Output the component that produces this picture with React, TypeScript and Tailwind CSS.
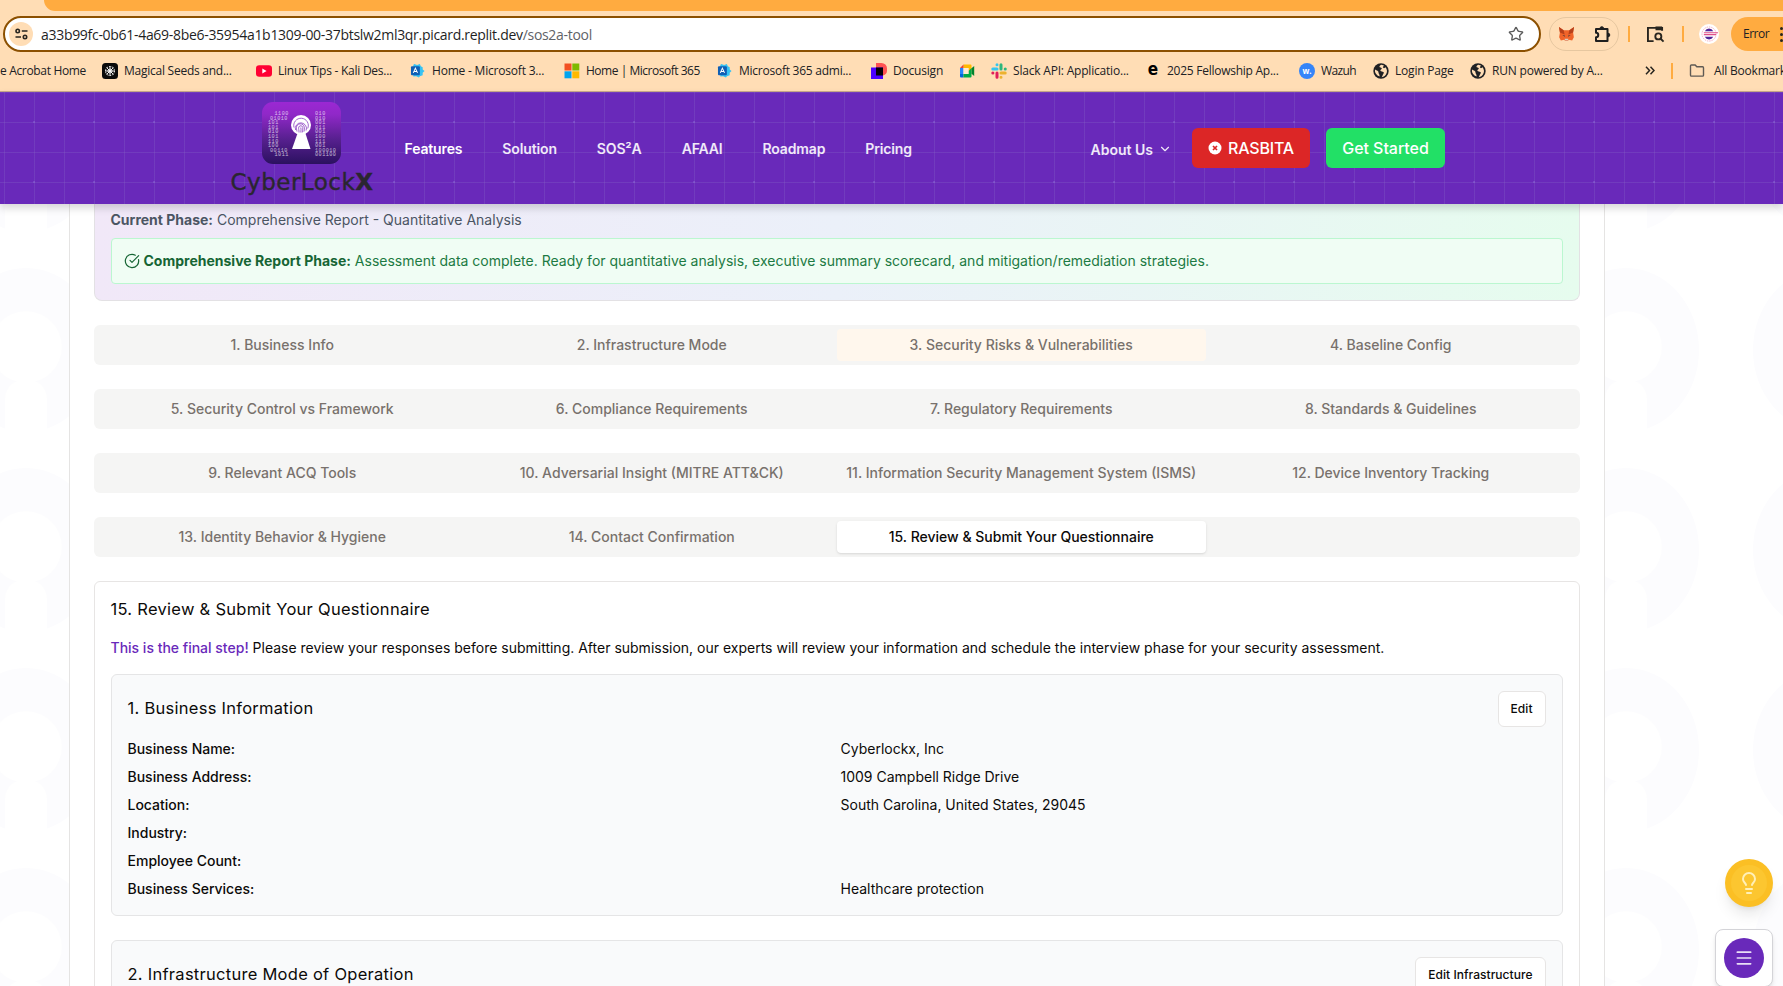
import React from "react";
import { ChevronDown, CircleCheckBig, Lightbulb, Menu, Star } from "lucide-react";

const PURPLE_GRID =
  "bg-[#6929ba] bg-[image:radial-gradient(circle_at_1px_1px,rgba(150,120,225,0.35)_1px,transparent_1.2px),linear-gradient(to_right,rgba(140,120,200,0.24)_1px,transparent_1px),linear-gradient(to_bottom,rgba(140,120,200,0.24)_1px,transparent_1px)] bg-[size:60px_60px,30px_30px,30px_30px] bg-[position:33px_29px,4px_0px,4px_0px]";

function GlobeIcon() {
  return (
    <svg width="16" height="16" viewBox="0 0 16 16">
      <circle cx="8" cy="8" r="7.700" fill="#202124" />
      <path d="M8.200 1.800C6 3 6 4.300 7.600 4.600c1.600.3 1.500 1.400.400 2C6.900 7.200 7.200 8.300 8.800 8.400c1.900.1 2.600 1.300 1.500 2.500-.8.9-.6 1.700-1.600 3.300A6.200 6.200 0 0 0 12.600 4.200L11 5.200 9.800 4.300 11 2.600z" fill="#ffddb5" />
      <path d="M2 6.500c1.800 1 3.700 1.600 3.500 3.100-.2 1.200 1.300 1.500 1.100 3.800A6 6 0 0 1 2 6.500z" fill="#ffddb5" />
    </svg>
  );
}

function AdminIcon() {
  return (
    <svg width="16" height="15" viewBox="0 0 16 16">
      <path d="M4 1l3 1 3-1 1 2.500 2 1V7l2 1.500-2 2V13l-3 1-1 1.500L6 14l-3 .5V2z" fill="#36c2f3" />
      <rect x="0.500" y="3.500" width="9.500" height="9.500" rx="1" fill="#0f5fb5" />
      <path d="M3 10.500L5.200 5.500 7.500 10.500M3.800 9h3" stroke="#fff" strokeWidth="1.100" fill="none" />
    </svg>
  );
}

function SeedsIcon() {
  return (
    <svg width="16" height="16" viewBox="0 0 16 16">
      <rect width="16" height="16" rx="3.500" fill="#0b0b0b" />
      <g stroke="#fff" strokeWidth="0.900" fill="none">
        <path d="M8 3v10M3 8h10M4.500 4.500l7 7M11.500 4.500l-7 7" />
        <circle cx="8" cy="8" r="2" />
        <circle cx="8" cy="8" r="4.500" strokeDasharray="1.600 1.200" />
      </g>
    </svg>
  );
}

function YouTubeIcon() {
  return (
    <svg width="16" height="16" viewBox="0 0 16 16">
      <rect y="2.300" width="16" height="11.500" rx="3.200" fill="#ff0033" />
      <path d="M6.300 5.600v4.800L10.600 8z" fill="#fff" />
    </svg>
  );
}

function MicrosoftIcon() {
  return (
    <svg width="16" height="16" viewBox="0 0 16 16">
      <path fill="#f25022" d="M0.500 0.500h7v7h-7z" />
      <path fill="#7fba00" d="M8.300 0.500h7v7h-7z" />
      <path fill="#00a4ef" d="M0.500 8.300h7v7h-7z" />
      <path fill="#ffb900" d="M8.300 8.300h7v7h-7z" />
    </svg>
  );
}

function DocusignIcon() {
  return (
    <svg width="16" height="16" viewBox="0 0 16 16">
      <path fill="#ff5252" d="M5 0h5.500A5.500 5.500 0 0 1 16 5.500v2a5 5 0 0 1-4 5H5z" />
      <path fill="#4c00ff" d="M0 4.500h12V16H0z" />
      <path fill="#050008" d="M5 4.500h7v8H5z" />
    </svg>
  );
}

function MeetIcon() {
  return (
    <svg width="16" height="16" viewBox="0 0 16 16">
      <path fill="#ffba00" d="M4.500 1.500H11.500a1 1 0 0 1 1 1V7l-3 1V5H4.500z" />
      <path fill="#ea4335" d="M1 5l3.500-3.500V5z" />
      <path fill="#2684fc" d="M1 5h3.500v6H1z" />
      <path fill="#0066da" d="M1 11h3.500v3.500H2a1 1 0 0 1-1-1z" />
      <path fill="#00ac47" d="M4.500 11H9.500V8l3-3v8.500a1 1 0 0 1-1 1h-7z" />
      <path fill="#00832d" d="M12.500 5.200L15.200 3v10l-2.700-2.200z" />
      <path fill="#ffe9cf" d="M4.500 5h5v6h-5z" />
    </svg>
  );
}

function SlackIcon() {
  return (
    <svg width="16" height="16" viewBox="0 0 16 16" strokeWidth="3" strokeLinecap="round">
      <path stroke="#36c5f0" d="M6 6H1.800M6 1.700v.1" />
      <path stroke="#2eb67d" d="M10 6V1.800M14.200 6h.1" />
      <path stroke="#ecb22e" d="M10 10h4.200M10 14.200v.1" />
      <path stroke="#e01e5a" d="M6 10v4.200M1.800 10h.1" />
    </svg>
  );
}

function LetterE() {
  return <span className="block w-4 pb-[3px] text-center font-['DejaVu_Sans_Condensed','DejaVu_Sans'] text-[17px] leading-4 font-bold text-black">e</span>;
}

function WazuhIcon() {
  return (
    <span className="flex size-4 items-center justify-center rounded-full bg-[#3585f9] text-[8px] font-bold text-white">
      w.
    </span>
  );
}

type Bookmark = { label: string; icon?: React.ReactNode; cell: string; tracking: string };

const bookmarks: Bookmark[] = [
  { label: "e Acrobat Home", cell: "w-[102px]", tracking: "tracking-[-0.33px]" },
  { label: "Magical Seeds and...", icon: <SeedsIcon />, cell: "w-[154px]", tracking: "tracking-[-0.25px]" },
  { label: "Linux Tips - Kali Des...", icon: <YouTubeIcon />, cell: "w-[154px]", tracking: "tracking-[-0.25px]" },
  { label: "Home - Microsoft 3...", icon: <AdminIcon />, cell: "w-[154px]", tracking: "tracking-[-0.2px]" },
  { label: "Home | Microsoft 365", icon: <MicrosoftIcon />, cell: "w-[153px]", tracking: "tracking-[-0.48px]" },
  { label: "Microsoft 365 admi...", icon: <AdminIcon />, cell: "w-[154px]", tracking: "tracking-[-0.25px]" },
  { label: "Docusign", icon: <DocusignIcon />, cell: "w-[88px]", tracking: "tracking-[-0.2px]" },
  { label: "", icon: <MeetIcon />, cell: "w-[32px]", tracking: "tracking-[-0.2px]" },
  { label: "Slack API: Applicatio...", icon: <SlackIcon />, cell: "w-[154px]", tracking: "tracking-[-0.2px]" },
  { label: "2025 Fellowship Ap...", icon: <LetterE />, cell: "w-[154px]", tracking: "tracking-[-0.26px]" },
  { label: "Wazuh", icon: <WazuhIcon />, cell: "w-[74px]", tracking: "tracking-[-0.6px]" },
  { label: "Login Page", icon: <GlobeIcon />, cell: "w-[97px]", tracking: "tracking-[-0.2px]" },
  { label: "RUN powered by A...", icon: <GlobeIcon />, cell: "w-[174px]", tracking: "tracking-[-0.2px]" },
];

function BrowserBar() {
  return (
    <div className="h-[92px] overflow-hidden border-b border-[#c9a98a] bg-[#ffddb5] font-['Open_Sans',sans-serif] text-[#202124]">
      <div className="flex h-[11px] justify-end">
        <div className="h-[11px] w-[1739px] rounded-bl-[11px] bg-[#ffab40]" />
      </div>
      <div className="mt-[5px] flex h-9 items-center">
        <div className="ml-[3px] flex h-9 w-[1538px] shrink-0 items-center rounded-full border-2 border-[#8c5000] bg-white">
          <span className="ml-1 flex size-6 items-center justify-center rounded-full bg-[#ffddb5]">
            <svg width="13" height="12" viewBox="0 0 13 12" fill="none" stroke="#28251f" strokeWidth="1.600">
              <circle cx="2.700" cy="3" r="1.700" />
              <path d="M6.800 3H12.500M0.500 9H6" />
              <circle cx="10" cy="9" r="1.700" />
            </svg>
          </span>
          <span className="ml-2 text-[14px] tracking-[-0.3px] whitespace-nowrap text-[#1f1f1f]">
            a33b99fc-0b61-4a69-8be6-35954a1b1309-00-37btslw2ml3qr.picard.replit.dev<span className="text-[#5f6368]">/sos2a-tool</span>
          </span>
          <Star className="mr-[15px] ml-auto size-[16px] text-[#5a5a5a]" strokeWidth={2} />
        </div>
        <div className="ml-2 flex h-[34px] w-[70px] shrink-0 items-center justify-between rounded-full border border-[#e6c7a0] pr-[7px] pl-2">
          <svg width="17" height="16" viewBox="0 0 17 17">
            <path d="M0.500 1l5 3.500h6l5-3.500-1 6 .8 5-1.800 3.500-3.500-1L9.800 16H7.200L6 14.500l-3.500 1L.700 12l.8-5z" fill="#f0642a" />
            <path d="M.500 1l5 3.500L6.500 9 1.500 7zM16.500 1l-5 3.500-1 4.500 5-2z" fill="#b8401a" />
            <path d="M4 9.500l2.500.5.5 1.500zM13 9.500l-2.500.5-.5 1.500z" fill="#26303d" />
            <path d="M6.500 13.500h4l-.5 2h-3z" fill="#d9ccc2" />
          </svg>
          <svg width="17" height="18" viewBox="0 0 17 18" fill="none" stroke="#1f1f1f" strokeWidth="2">
            <path d="M2 4h11.500v12H2v-3.800c3 0 3-4.400 0-4.400z" strokeLinejoin="round" />
            <path d="M6 3.500a1.800 1.800 0 0 1 3.600 0z" fill="#1f1f1f" strokeWidth="1" />
            <path d="M14 8.200a1.800 1.800 0 0 1 0 3.600z" fill="#1f1f1f" strokeWidth="1" />
          </svg>
        </div>
        <span className="ml-[9px] h-4 w-[2px] shrink-0 bg-[#ffab40]" />
        <svg className="ml-[16px] shrink-0" width="19" height="17" viewBox="0 0 20 18" fill="none" stroke="#28251f" strokeWidth="2">
          <path d="M8 16H2V2h15v3" />
          <path d="M10 2.500h7" strokeWidth="4" />
          <circle cx="13" cy="11" r="3.200" />
          <path d="M15.500 13.500l3 3" />
        </svg>
        <span className="ml-[17px] h-4 w-[2px] shrink-0 bg-[#ffab40]" />
        <span className="ml-[15px] flex size-[20px] shrink-0 items-center justify-center rounded-full bg-white">
          <svg width="19" height="16" viewBox="0 0 20 17">
            <circle cx="9.500" cy="8.500" r="7.500" fill="none" stroke="#f3a6bd" strokeWidth="1" strokeDasharray="1.500 1" />
            <path d="M5 5.500a5 5 0 0 1 9 0zM5 11.500a5 5 0 0 0 9 0z" fill="#52279a" />
            <path d="M4 7.200h15M4 9.200h13" stroke="#e0508a" strokeWidth="1.200" />
          </svg>
        </span>
        <div className="ml-[12px] flex h-[34px] w-[80px] shrink-0 items-center rounded-full bg-[#ffab40] pl-3 text-[12px]">
          <span className="w-[26px] tracking-[-0.5px]">Error</span>
          <span className="ml-[11px] flex flex-col gap-[3px]">
            <i className="size-[3px] rounded-full bg-[#28251f]" />
            <i className="size-[3px] rounded-full bg-[#28251f]" />
            <i className="size-[3px] rounded-full bg-[#28251f]" />
          </span>
        </div>
      </div>
      <div className="mt-1 flex h-[29px] items-center text-[12px] whitespace-nowrap">
        {bookmarks.map((b, i) => (
          <div key={i} className={`flex shrink-0 items-center gap-[6px] ${b.cell}`}>
            {b.icon}
            <span className={b.tracking}>{b.label}</span>
          </div>
        ))}
        <svg width="10" height="9" viewBox="0 0 10 9" fill="none" stroke="#28251f" strokeWidth="1.500" className="ml-px shrink-0">
          <path d="M1 .8l3.500 3.700L1 8.200M5.500.8L9 4.500 5.500 8.200" />
        </svg>
        <span className="ml-[16px] h-4 w-[2px] shrink-0 bg-[#ffab40]" />
        <svg width="16" height="13" viewBox="0 0 16 14" fill="none" stroke="#5f5a54" strokeWidth="1.500" className="ml-[16px] shrink-0">
          <path d="M1 2a1 1 0 0 1 1-1h4l1.800 2H14a1 1 0 0 1 1 1v8a1 1 0 0 1-1 1H2a1 1 0 0 1-1-1z" />
        </svg>
        <span className="ml-[9px] tracking-[-0.2px]">All Bookmarks</span>
      </div>
    </div>
  );
}

const leftBits = [
  { x: 12.5, t: "1100" }, { x: 8, t: "01010" }, { x: 6, t: "101" }, { x: 6, t: "101" }, { x: 6, t: "010" },
  { x: 6, t: "101" }, { x: 6, t: "110" }, { x: 6, t: "100" }, { x: 8, t: "00110" }, { x: 12.5, t: "1011" },
];
const rightBits = ["010", "010", "001", "011", "001", "100", "111", "001", "100010", "001100"];

function Logo() {
  return (
    <div className="flex w-[144px] flex-col items-center">
      <svg width="79" height="62" viewBox="0 0 79 62" className="relative -left-px">
        <defs>
          <linearGradient id="logo-bg" x1="0" y1="0" x2="0" y2="1">
            <stop offset="0" stopColor="#9b28d3" />
            <stop offset="0.200" stopColor="#9028c8" />
            <stop offset="0.600" stopColor="#57208f" />
            <stop offset="1" stopColor="#2b1160" />
          </linearGradient>
        </defs>
        <rect width="79" height="62" rx="11" fill="url(#logo-bg)" />
        <g fill="#fff" fillOpacity="0.700" fontFamily="Liberation Mono, monospace" fontSize="5.200" letterSpacing="0.450">
          {leftBits.map((b, i) => (
            <text key={i} x={b.x} y={13.2 + i * 4.55}>{b.t}</text>
          ))}
          {rightBits.map((t, i) => (
            <text key={i} x="53" y={13.2 + i * 4.55}>{t}</text>
          ))}
        </g>
        <circle cx="39" cy="23" r="10" fill="#fff" />
        <path d="M36 30h7l5.500 17h-18.500z" fill="#fff" />
        <g fill="none" stroke="#8a3fc0" strokeWidth="0.800">
          <path d="M32 25.500a7.300 7.300 0 1 1 13.700 1M33.500 28a5.600 5.600 0 1 1 10.600 .5M35 29.500c-.4-2-.8-3.500-.3-5.300a4 4 0 0 1 7.700 1.500c0 1.600 0 2.800-.5 4M37 30.500c.2-2-.8-4-.2-5.500a2.100 2.100 0 0 1 4 .5c.1 2-.1 3.400-.6 5M38.800 25.500c.2 1.500.4 3 0 5" />
        </g>
      </svg>
      <div className="mt-[4px] h-7 font-['DejaVu_Sans',sans-serif] text-[23px] leading-7 font-normal tracking-[0.5px] whitespace-nowrap text-[#2a2630] [-webkit-text-stroke:0.4px_#2a2630]">
        CyberLock<span className="font-bold">X</span>
      </div>
    </div>
  );
}

const navItems = ["Features", "Solution", "SOS²A", "AFAAI", "Roadmap", "Pricing"];

function Header() {
  return (
    <header className={`relative z-10 flex h-[112px] shrink-0 items-center shadow-[0_4px_8px_rgba(0,0,0,0.16)] ${PURPLE_GRID}`}>
      <div className="ml-[230px] pt-[1px]">
        <Logo />
      </div>
      <nav className="ml-[30.5px] flex items-center gap-10 text-[14px] font-semibold tracking-[-0.14px] text-white/90">
        {navItems.map((n) => (
          <span key={n} className={n === "Features" ? "text-white" : ""}>{n}</span>
        ))}
      </nav>
      <div className="mr-[338px] ml-auto flex items-center text-white">
        <span className="flex items-center gap-[5px] pt-[2px] text-[14px] font-semibold text-white/90">
          About Us <ChevronDown className="size-[14px]" />
        </span>
        <span className="ml-[20px] flex h-10 w-[118px] items-center justify-center gap-[6px] rounded-md bg-[#dc2626] text-[16px] font-medium tracking-[-0.2px]">
          <svg width="14" height="14" viewBox="0 0 14 14">
            <circle cx="7" cy="7" r="6.500" fill="#fff" />
            <path d="M5 5l4 4M9 5l-4 4" stroke="#dc2626" strokeWidth="1.700" />
          </svg>
          RASBITA
        </span>
        <span className="ml-4 flex h-10 w-[119px] items-center justify-center rounded-md bg-[#22e066] text-[16px] font-medium tracking-[-0.05px]">
          Get Started
        </span>
      </div>
    </header>
  );
}

const faintBits = [
  { x: 1715, y: 242, t: "10101011" }, { x: 1715, y: 542, t: "10101011" }, { x: 1715, y: 842, t: "10101011" },
  { x: 1755, y: 302, t: "11100" }, { x: 1755, y: 602, t: "11100" }, { x: 1755, y: 902, t: "11100" },
  { x: 1724, y: 422, t: "10110101" }, { x: 1724, y: 722, t: "10110101" },
  { x: 1764, y: 482, t: "110" }, { x: 1764, y: 782, t: "110" },
  { x: 1607, y: 212, t: "1100" }, { x: 1607, y: 512, t: "1100" }, { x: 1607, y: 812, t: "1100" },
  { x: 1607, y: 332, t: "00" }, { x: 1607, y: 632, t: "00" }, { x: 1607, y: 932, t: "00" },
  { x: 44, y: 452, t: "0100" }, { x: 54, y: 572, t: "01" }, { x: 54, y: 272, t: "01" }, { x: 0, y: 482, t: "10" },
];

function Backdrop() {
  return (
    <svg className="absolute inset-0" width="1783" height="782" viewBox="0 204 1783 782">
      <defs>
        <pattern id="keyholes" x="-74" y="250" width="200" height="200" patternUnits="userSpaceOnUse">
          <ellipse cx="100" cy="100" rx="73" ry="82" fill="#fcfcfe" />
          <circle cx="100" cy="97" r="36" fill="#fff" />
          <path d="M79 185V148a21 19 0 0 1 42 0V185z" fill="#fff" />
        </pattern>
      </defs>
      <rect y="204" width="1783" height="782" fill="url(#keyholes)" />
      <g fill="#000" fillOpacity="0.020" fontFamily="Liberation Mono, monospace" fontSize="9">
        {faintBits.map((b, i) => (
          <text key={i} x={b.x} y={b.y}>{b.t}</text>
        ))}
      </g>
    </svg>
  );
}

const tabRows = [
  ["1. Business Info", "2. Infrastructure Mode", "3. Security Risks & Vulnerabilities", "4. Baseline Config"],
  ["5. Security Control vs Framework", "6. Compliance Requirements", "7. Regulatory Requirements", "8. Standards & Guidelines"],
  ["9. Relevant ACQ Tools", "10. Adversarial Insight (MITRE ATT&CK)", "11. Information Security Management System (ISMS)", "12. Device Inventory Tracking"],
  ["13. Identity Behavior & Hygiene", "14. Contact Confirmation", "15. Review & Submit Your Questionnaire"],
];

function tabClass(label: string) {
  if (label.startsWith("15.")) return "bg-white text-[#0c0a09] shadow-sm";
  if (label.startsWith("3.")) return "bg-[#fff7ed] text-[#78716c]";
  return "text-[#78716c]";
}

const businessRows = [
  ["Business Name:", "Cyberlockx, Inc"],
  ["Business Address:", "1009 Campbell Ridge Drive"],
  ["Location:", "South Carolina, United States, 29045"],
  ["Industry:", ""],
  ["Employee Count:", ""],
  ["Business Services:", "Healthcare protection"],
];

function SectionHead({ title, action }: { title: string; action: string }) {
  return (
    <div className="flex h-9 items-center justify-between">
      <h3 className="pb-[2px] text-[16.5px] tracking-[0.27px]">{title}</h3>
      <button className="h-9 rounded-md border border-[#e7e5e4] bg-white px-3 text-[12px] font-medium tracking-[0.04px]">{action}</button>
    </div>
  );
}

function Content() {
  return (
    <main className="relative ml-[68.5px] h-[782px] w-[1536px] overflow-hidden border-x border-[#e5e4e3] bg-white px-6 text-[14px] text-[#0c0a09]">
      <section className="h-[97px] rounded-b-lg border border-t-0 border-[#e3e1e4] bg-linear-to-r from-[#f1e8f8] via-[#ebf0f9] to-[#e6fcee] px-4 pt-[6px]">
        <p className="leading-5 text-[#4b5563]">
          <b className="font-bold">Current Phase:</b> Comprehensive Report - Quantitative Analysis
        </p>
        <div className="mt-2 flex h-[46px] items-center rounded border border-[#bbf7d0] bg-[#f0fdf4] px-3 text-[#166534]">
          <CircleCheckBig className="mr-1 size-4 shrink-0" strokeWidth={1.8} />
          <p className="pb-[2px]"><b className="font-bold">Comprehensive Report Phase:</b> <span className="text-[#1c7a43]">Assessment data complete. Ready for quantitative analysis, executive summary scorecard, and mitigation/remediation strategies.</span></p>
        </div>
      </section>
      <div className="mt-6 flex flex-col gap-6">
        {tabRows.map((row, i) => (
          <div key={i} className="grid h-10 grid-cols-4 rounded-md bg-[#f5f5f4] p-1 font-medium">
            {row.map((t) => (
              <div key={t} className={`flex items-center justify-center rounded-sm pb-[2px] whitespace-nowrap ${tabClass(t)}`}>{t}</div>
            ))}
          </div>
        ))}
      </div>
      <section className="mt-6 h-[500px] rounded-md border border-[#e7e5e4] px-4 pt-[15px]">
        <h2 className="text-[16.5px] leading-6 tracking-[0.27px]">15. Review &amp; Submit Your Questionnaire</h2>
        <p className="mt-[17px] leading-5">
          <span className="font-medium text-[#6929ba]">This is the final step!</span> Please review your responses before submitting. After submission, our experts will review your information and schedule the interview phase for your security assessment.
        </p>
        <div className="mt-4 h-[242px] rounded-md border border-[#e5e5e6] bg-[#f9fafb] p-4">
          <SectionHead title="1. Business Information" action="Edit" />
          <dl className="mt-3 grid grid-cols-2 gap-2 leading-5">
            {businessRows.map(([k, v]) => (
              <React.Fragment key={k}>
                <dt className="font-medium">{k}</dt>
                <dd>{v}</dd>
              </React.Fragment>
            ))}
          </dl>
        </div>
        <div className="mt-6 h-[242px] rounded-md border border-[#e5e5e6] bg-[#f9fafb] p-4">
          <SectionHead title="2. Infrastructure Mode of Operation" action="Edit Infrastructure" />
        </div>
      </section>
    </main>
  );
}

function FloatingActions() {
  return (
    <div className="absolute top-[655px] right-[10px] z-20 flex flex-col items-end gap-[22px]">
      <span className="flex size-12 items-center justify-center rounded-full bg-[#fbbf24] shadow-lg">
        <span className="flex size-9 items-center justify-center rounded-full bg-[#fcc630]">
          <Lightbulb className="size-6 text-[#fff0b8]" strokeWidth={2} />
        </span>
      </span>
      <span className="flex h-[58px] w-[58px] items-center justify-center rounded-lg border border-[#d4d4d8] bg-white shadow-md">
        <span className="flex size-10 items-center justify-center rounded-full bg-[#6929ba]">
          <Menu className="size-5 text-[#e9dff6]" strokeWidth={2} />
        </span>
      </span>
    </div>
  );
}

export default function App() {
  return (
    <div className="flex h-[986px] w-[1783px] flex-col overflow-hidden bg-white font-['Inter',sans-serif]">
      <BrowserBar />
      <Header />
      <div className="relative h-[782px] overflow-hidden">
        <Backdrop />
        <Content />
        <FloatingActions />
      </div>
    </div>
  );
}
